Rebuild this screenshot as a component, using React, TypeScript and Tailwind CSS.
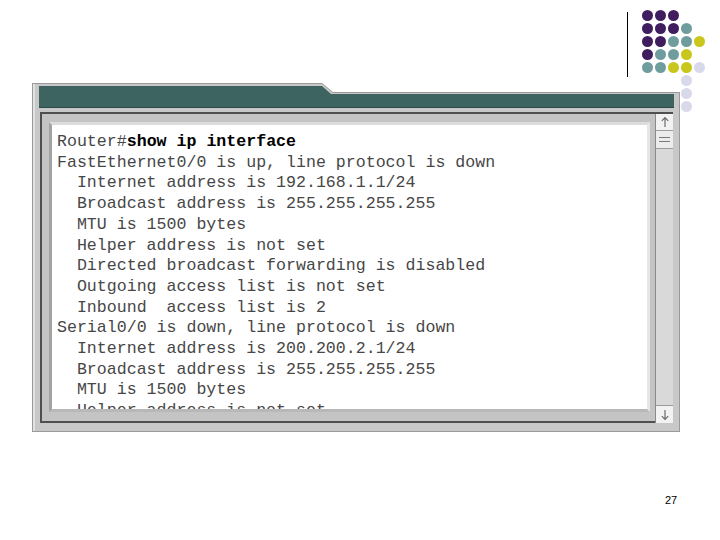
import React from "react";

const P = "bg-[#3f1d5e]";
const T = "bg-[#6f9d9e]";
const Y = "bg-[#c9c71c]";
const L = "bg-[#d9d9ec]";

// 8 rows x 5 cols, "" = empty cell
const dots: string[][] = [
  [P, P, P, "", ""],
  [P, P, P, T, ""],
  [P, P, T, T, Y],
  [P, T, T, Y, ""],
  [T, T, Y, Y, L],
  ["", "", "", L, ""],
  ["", "", "", L, ""],
  ["", "", "", L, ""],
];

const output = [
  "FastEthernet0/0 is up, line protocol is down",
  "  Internet address is 192.168.1.1/24",
  "  Broadcast address is 255.255.255.255",
  "  MTU is 1500 bytes",
  "  Helper address is not set",
  "  Directed broadcast forwarding is disabled",
  "  Outgoing access list is not set",
  "  Inbound  access list is 2",
  "Serial0/0 is down, line protocol is down",
  "  Internet address is 200.200.2.1/24",
  "  Broadcast address is 255.255.255.255",
  "  MTU is 1500 bytes",
  "  Helper address is not set",
];

function UpArrow() {
  return (
    <svg width="10" height="12" viewBox="0 0 10 12" fill="none" stroke="#6b6b6b" strokeWidth="1.2">
      <path d="M5 11V1.5M1.8 4.8L5 1.5l3.2 3.3" />
    </svg>
  );
}

function DownArrow() {
  return (
    <svg width="10" height="12" viewBox="0 0 10 12" fill="none" stroke="#6b6b6b" strokeWidth="1.2">
      <path d="M5 1v9.5M1.8 7.2L5 10.5l3.2-3.3" />
    </svg>
  );
}

function ScrollBar() {
  return (
    <div className="w-[18px] shrink-0 flex flex-col bg-[#d9d9d9] border-l border-[#8a8a8a]">
      <div className="h-[17px] shrink-0 flex items-center justify-center bg-[#f2f2f2] border-b border-[#9d9d9d]">
        <UpArrow />
      </div>
      <div className="h-[18px] shrink-0 flex flex-col items-center justify-center gap-[3px] bg-[#ececec] border-b border-[#9d9d9d]">
        <div className="w-[11px] h-px bg-[#7a7a7a]" />
        <div className="w-[11px] h-px bg-[#7a7a7a]" />
      </div>
      <div className="flex-1" />
      <div className="h-[18px] shrink-0 flex items-center justify-center bg-[#f2f2f2] border-t border-[#9d9d9d]">
        <DownArrow />
      </div>
    </div>
  );
}

function TerminalWindow() {
  return (
    <div className="ml-[32px] w-[648px] h-[349px] shrink-0 bg-[#9a9a9a] p-px [clip-path:polygon(0_0,290px_0,301px_9px,100%_9px,100%_100%,0_100%)]">
      <div className="h-full flex flex-col bg-[#c8c8c8] border-l-2 border-[#e2e2e2] pl-[4px] pr-[5px] pt-[2px] pb-[8px] [clip-path:polygon(0_0,289px_0,300px_9px,100%_9px,100%_100%,0_100%)]">
        <div className="h-[22px] shrink-0 bg-[#3e6462] border-b border-[#2f4a48] [clip-path:polygon(0_0,283px_0,292px_8px,100%_8px,100%_100%,0_100%)]" />
        <div className="mt-[4px] ml-[1px] mr-[1px] flex-1 min-h-0 flex border-l-2 border-t-2 border-[#4f4f4f] bg-[#c4c4c4]">
          <div className="flex-1 min-h-0 pl-[7px] pt-[8px] pr-[5px] pb-[9px] border-b-2 border-[#4f4f4f]">
            <div className="h-full bg-white border-[3px] border-l-[#a3a3a3] border-t-[#dcdcdc] border-r-[#e6e6e6] border-b-[#b8b8b8] overflow-hidden">
              <div className="pl-[5px] pt-[7px] font-['Liberation_Mono',monospace] text-[16.6px] leading-[20.7px] text-[#474747] whitespace-pre">
                <div>
                  Router#<span className="font-bold text-black">show ip interface</span>
                </div>
                {output.map((line, i) => (
                  <div key={i}>{line}</div>
                ))}
              </div>
            </div>
          </div>
          <ScrollBar />
        </div>
      </div>
    </div>
  );
}

export default function App() {
  return (
    <div className="w-[720px] h-[540px] bg-white flex flex-col font-['Liberation_Sans',Arial,sans-serif]">
      <div className="h-[83px] shrink-0 flex items-start pl-[627px] pt-[10px]">
        <div className="w-px h-[65px] mt-[2px] bg-black" />
        <div className="ml-[14px] grid grid-cols-[repeat(5,11px)] auto-rows-[11px] gap-[2px]">
          {dots.flat().map((c, i) => (
            <div key={i} className={c ? `${c} rounded-full` : ""} />
          ))}
        </div>
      </div>
      <TerminalWindow />
      <div className="mt-[62px] ml-[665px] text-[11px] leading-[13px] text-black">27</div>
    </div>
  );
}
